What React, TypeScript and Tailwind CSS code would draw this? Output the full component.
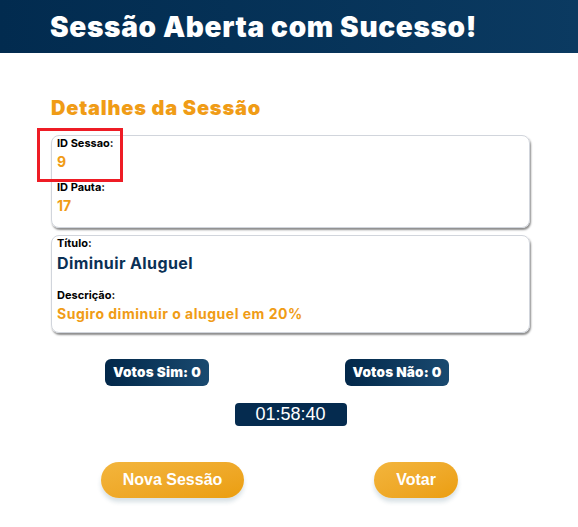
import React from 'react';

const poppins = { fontFamily: 'Inter, "DejaVu Sans", sans-serif' };

function Field({ label, value, valueClass }: { label: string; value: string; valueClass: string }) {
  return (
    <div>
      <div className="text-[11px] font-bold text-black leading-[15px]">{label}</div>
      <div className={valueClass}>{value}</div>
    </div>
  );
}

function App() {
  return (
    <div className="relative bg-white min-h-[527px] w-full" style={poppins}>
      <header className="h-[53px] bg-gradient-to-r from-[#022b4f] to-[#0b3a61] flex items-center pl-[50px]">
        <h1 className="text-white text-[28px] font-black tracking-[0.65px]">Sessão Aberta com Sucesso!</h1>
      </header>

      <main className="w-[479px] ml-[51px] pt-[40px]">
        <h2 className="text-[#f09c16] text-[20px] font-black tracking-[0.8px] leading-[30px]">Detalhes da Sessão</h2>

        <div className="mt-[12px] h-[93px] rounded-lg border border-gray-300 shadow-[1px_2px_2px_rgba(0,0,0,0.45)] px-[5px] pt-0 flex flex-col gap-[7px]">
          <Field label="ID Sessao:" value="9" valueClass="text-[#f09c16] text-[14px] font-bold leading-[22px]" />
          <Field label="ID Pauta:" value="17" valueClass="text-[#f09c16] text-[14px] font-bold leading-[22px]" />
        </div>

        <div className="mt-[7px] h-[98px] rounded-lg border border-gray-300 shadow-[1px_2px_2px_rgba(0,0,0,0.45)] px-[5px] pt-0 flex flex-col gap-[13px]">
          <Field label="Título:" value="Diminuir Aluguel" valueClass="text-[#0a3055] text-[16px] font-bold tracking-[0.4px] leading-[24px]" />
          <Field label="Descrição:" value="Sugiro diminuir o aluguel em 20%" valueClass="text-[#f09c16] text-[14px] font-bold tracking-[0.5px] leading-[22px]" />
        </div>

        <div className="mt-[26px] flex justify-between pl-[54px] pr-[81px]">
          <span className="w-[104px] h-[27px] rounded-md bg-gradient-to-r from-[#03284a] to-[#1a4a70] text-white text-[13.5px] font-black tracking-[0.2px] flex items-center justify-center">Votos Sim: 0</span>
          <span className="w-[104px] h-[27px] rounded-md bg-gradient-to-r from-[#03284a] to-[#1a4a70] text-white text-[13.5px] font-black tracking-[0.2px] flex items-center justify-center">Votos Não: 0</span>
        </div>

        <div className="mt-[17px] flex justify-center">
          <span className="w-[112px] h-[23px] rounded-[4px] bg-[#052b4f] text-white text-[18px] flex items-center justify-center" style={{ fontFamily: '"Liberation Sans", Arial, sans-serif' }}>01:58:40</span>
        </div>

        <div className="mt-[36px] flex justify-between pl-[50px] pr-[72px]" style={{ fontFamily: '"Liberation Sans", Arial, sans-serif' }}>
          <button className="w-[143px] h-[36px] rounded-full bg-gradient-to-br from-[#f3b53c] to-[#eb9e0c] text-white font-bold text-[16px] shadow-[0_4px_4px_rgba(40,90,110,0.18)]">Nova Sessão</button>
          <button className="w-[84px] h-[36px] rounded-full bg-gradient-to-br from-[#f3b53c] to-[#eb9e0c] text-white font-bold text-[16px] shadow-[0_4px_4px_rgba(40,90,110,0.18)]">Votar</button>
        </div>
      </main>

      <div className="absolute left-[37px] top-[128px] w-[86px] h-[54px] border-[3px] border-[#ee1c25]" />
    </div>
  );
}

export default App;
